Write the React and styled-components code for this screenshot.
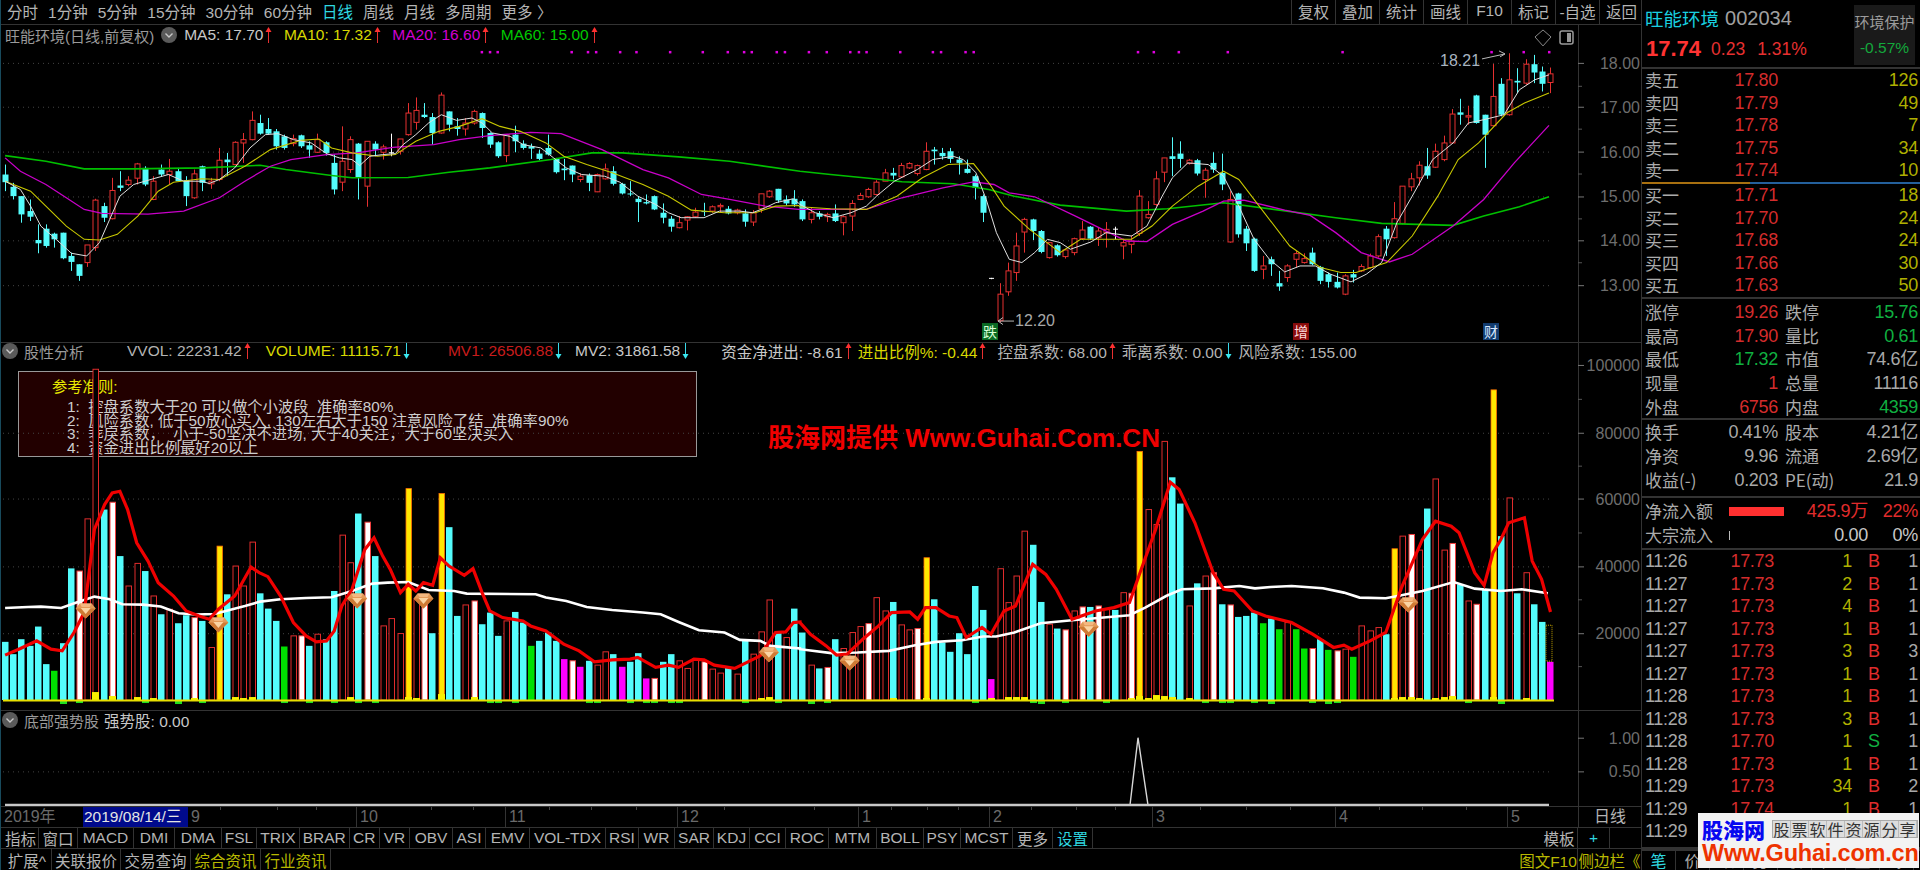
import React from 'react';
import styled, { createGlobalStyle } from 'styled-components';

const FONT = `"Liberation Sans","Noto Sans CJK SC",sans-serif`;
const CJK = `"Noto Sans CJK SC","Liberation Sans",sans-serif`;

const Global = createGlobalStyle`
  html, body { margin: 0; padding: 0; background: #000; overflow: hidden; }
  * { box-sizing: border-box; }
`;

/* ---------- data ---------- */
const X = (i) => 5 + 8.22 * i;
// bar kinds: c cyan, r hollow red
const C = [
['c',525,548,495,575],['c',562,590,550,600],['c',590,645,590,670],['c',635,652,600,665],['c',722,732,675,762],['c',688,740,675,745],['c',703,720,700,745],['c',700,777,700,780],['c',770,788,760,815],['c',795,830,795,845],
['r',737,790,737,803],['r',602,745,598,755],['c',620,655,610,668],['r',573,658,535,660],['c',558,565,515,575],['r',542,555,530,560],['r',493,536,490,555],['c',505,555,500,560],['r',545,600,530,602],['c',510,525,495,530],
['r',515,525,478,555],['c',515,545,505,545],['c',542,590,530,620],['r',523,595,510,598],['c',500,550,498,575],['r',545,553,535,568],['r',482,540,445,545],['c',480,488,460,530],['r',428,495,425,497],['r',420,430,400,490],
['r',362,420,335,422],['c',370,402,345,405],['c',388,402,355,405],['c',395,440,388,450],['c',410,445,405,450],['r',417,432,405,440],['c',407,440,405,445],['c',437,450,425,475],['r',420,458,402,460],['c',428,460,425,468],
['c',490,570,465,585],['r',485,548,380,575],['r',420,510,410,520],['c',432,535,430,600],['r',425,560,425,622],['c',432,450,425,470],['r',442,458,435,480],['w',458,462,402,470],['r',418,455,418,465],['r',340,405,310,408],
['r',332,368,293,390],['c',345,352,310,355],['c',352,400,340,435],['r',286,400,278,402],['c',335,375,335,395],['c',380,388,355,408],['r',370,388,355,408],['r',335,370,330,375],['c',340,385,338,415],['c',400,435,398,445],
['c',428,470,425,475],['r',405,468,405,488],['c',405,425,378,458],['c',432,445,422,450],['c',440,447,432,478],['c',462,478,450,482],['c',445,465,405,468],['c',478,518,475,522],['c',507,512,478,542],['c',498,525,498,548],
['r',530,540,522,548],['c',527,550,522,575],['r',525,577,522,578],['r',508,538,492,540],['c',515,553,500,558],['c',553,582,550,585],['c',582,585,545,590],['c',598,608,590,668],['c',608,612,585,615],['c',590,630,588,632],
['c',640,655,612,672],['c',658,682,650,697],['r',670,685,650,687],['r',652,662,650,693],['r',638,652,625,655],['c',635,638,610,650],['r',622,635,618,640],['r',618,622,612,640],['c',628,642,620,645],['r',632,640,628,645],
['c',642,667,630,682],['r',640,668,632,680],['r',583,628,583,640],['r',575,592,572,595],['c',568,603,568,610],['c',600,612,588,618],['c',598,615,572,622],
['c',605,660,600,665],['r',640,660,625,672],['c',642,652,635,660],['r',645,652,640,668],['c',642,665,615,668],['r',652,670,648,708],['r',612,650,602,695],['r',588,600,580,602],['r',570,592,565,595],['r',548,585,542,588],
['r',520,545,508,545],['c',520,528,505,540],['r',498,532,490,535],['r',492,505,488,508],['r',498,522,495,528],['r',455,510,428,512],['c',450,455,442,495],['c',460,470,445,480],['c',455,478,445,490],['c',480,490,470,525],
['c',508,520,480,522],['c',530,565,525,600],['c',590,640,585,668],['w',836,840,836,840],['r',885,965,852,970],['r',815,878,790,890],['r',740,820,700,845],['r',660,698,655,760],['c',660,695,658,722],['c',695,758,692,762],
['r',730,775,728,778],['c',738,768,735,772],['r',752,772,750,778],['r',718,760,715,768],['r',692,718,665,722],['c',682,718,680,722],['r',695,715,685,740],['r',690,700,668,745],['w',688,690,682,720],['r',730,740,718,780],
['r',725,735,708,762],['r',590,702,572,710],['r',645,655,605,658],['r',538,615,515,620],['r',475,518,475,548],['c',470,478,413,530],['c',462,478,425,505],['r',482,492,478,495],['c',482,522,478,528],['r',512,540,505,595],
['c',490,510,458,520],['c',520,555,462,572],['r',600,728,575,730],['c',582,705,580,715],['c',688,732,680,755],['c',718,815,715,818],['r',800,810,770,840],['c',780,795,772,830],['c',852,862,815,875],['r',800,835,795,848],
['r',763,780,755,805],['r',778,790,762,793],['c',760,795,745,798],['c',803,845,800,855],['c',825,848,820,865],['c',848,865,820,868],['r',830,885,825,888],['c',825,835,812,850],['r',802,815,795,818],['r',770,805,763,808],
['r',712,770,705,775],['c',688,720,680,770],['r',658,715,608,718],['r',560,672,560,675],['r',538,562,520,575],['r',497,535,485,558],['c',500,528,445,538],['r',455,503,432,505],['r',430,480,408,485],['r',343,430,328,432],
['c',338,345,297,375],['r',348,352,318,375],['c',287,370,285,372],['c',345,405,345,505],['r',290,378,192,380],['c',252,345,235,350],['r',240,345,160,348],['c',243,248,205,280],['r',193,250,178,255],['c',193,218,165,250],
['c',215,252,200,275],['r',222,248,203,280],
];

const V = 'c908 c945 c900 c920 c862 c975 g995 c912 c687 w695 r538 r88 c510 w488 c650 r740 r672 c695 r770 c825 r810 c852 c828 w835 c845 r925 y620 c765 r680 r740 r608 c762 c808 c845 g922 r890 w890 c920 r885 c900 c755 r587 r670 c522 w548 c650 r860 r838 r883 y447 r780 w770 c882 y462 c563 c830 r797 w785 c855 c820 c890 r845 c818 c850 g920 c905 c880 c905 m960 w965 m983 c965 r978 r938 c945 m983 c968 c942 m1018 w1018 c968 c945 r965 r988 r958 w968 r990 r1002 c985 r1005 c900 r945 r878 r782 c880 r895 c808 c880 r978 c988 w985 c900 r928 r880 r862 w853 r775 r815 c788 r857 r872 w868 y655 c780 c910 c938 c882 c945 c740 c812 m1020 r688 r790 r710 r575 c616 c788 r855 c868 w872 r815 w803 c803 w800 r810 c812 r760 w762 y335 r510 r555 r305 c413 c492 r800 c732 r710 w700 c795 w797 c833 c830 c820 g852 c838 g870 r850 g870 g928 w928 c900 g932 w935 r930 g953 r860 r875 r865 c885 y628 r590 w585 r632 c507 r418 r632 w612 c735 r785 w795 c750 y150 c590 r475 c762 r700 c795 c848 m968'.split(' ').map((s) => [s[0], +s.slice(1)]);

const z1 = (a) => a.map(([x, y]) => [x / 1.96, y / 3]);
const z2 = (a) => a.map(([x, y]) => [800 + x / 1.96, y / 3]);
const z5 = (a) => a.map(([x, y]) => [x / 1.96, 340 + y / 3]);
const z6 = (a) => a.map(([x, y]) => [800 + x / 1.912, 340 + y / 3]);
const P = (a) => a.map(([x, y]) => `${x.toFixed(1)},${y.toFixed(1)}`).join(' ');

const MA5 = P([...z1([[10,545],[40,570],[60,620],[80,680],[110,720],[140,762],[170,770],[195,730],[215,660],[235,590],[262,555],[300,538],[330,525],[360,545],[395,545],[410,552],[430,540],[460,505],[490,445],[520,405],[545,402],[575,420],[610,430],[640,462],[665,475],[690,480],[705,498],[725,470],[750,465],[775,462],[790,435],[815,405],[840,370],[865,345],[895,362],[925,355],[945,370],[965,400],[1000,410],[1025,435],[1060,445],[1085,475],[1110,505],[1140,525],[1185,530],[1215,548],[1250,590],[1285,615],[1310,640],[1335,655],[1380,655],[1410,635],[1450,635],[1475,640],[1500,625],[1520,610],[1555,598]]),
 ...z2([[0,615],[30,640],[65,655],[100,640],[130,620],[150,590],[185,545],[230,510],[260,480],[300,470],[320,480],[345,520],[365,600],[385,700],[410,780],[435,790],[460,760],[485,720],[510,730],[530,750],[570,728],[600,700],[650,710],[680,680],[710,590],[730,535],[760,490],[800,495],[830,530],[860,620],[890,720],[920,780],[950,818],[980,800],[1010,800],[1040,825],[1080,848],[1110,825],[1140,790],[1170,670],[1200,590],[1240,480],[1280,430],[1310,370],[1340,360],[1380,345],[1410,270],[1440,240],[1468,225]])]);
const MA10 = P([...z1([[10,545],[60,575],[100,635],[130,680],[165,720],[195,722],[230,705],[270,650],[310,575],[340,548],[395,538],[430,540],[480,500],[530,450],[590,422],[625,418],[650,445],[690,460],[740,470],[775,465],[815,425],[860,395],[900,380],[945,357],[980,380],[1020,395],[1070,430],[1105,470],[1150,495],[1200,520],[1260,555],[1310,590],[1355,632],[1420,640],[1480,640],[1520,620],[1565,618]]),
 ...z2([[0,622],[60,628],[130,630],[190,590],[240,535],[290,495],[340,492],[370,550],[400,620],[450,690],[510,760],[550,720],[650,720],[690,680],[730,620],[780,560],[830,515],[860,540],[900,620],[960,740],[1020,805],[1060,820],[1090,820],[1150,790],[1200,710],[1250,590],[1290,480],[1330,430],[1385,340],[1420,310],[1468,280]])]);
const MA20 = P([...z1([[10,475],[40,515],[90,555],[130,595],[165,630],[200,642],[290,644],[360,635],[430,595],[480,545],[530,500],[570,480],[640,465],[700,460],[770,443],[850,435],[900,420],[960,408],[1040,398],[1100,402],[1180,450],[1260,510],[1310,535],[1375,585],[1430,600],[1500,620],[1565,630]]),
 ...z2([[0,630],[130,630],[200,595],[280,565],[340,547],[380,555],[410,580],[460,592],[540,650],[600,695],[640,725],[680,727],[730,675],[790,635],[830,605],[870,602],[950,632],[1000,648],[1050,700],[1100,760],[1155,788],[1200,765],[1280,680],[1340,600],[1400,490],[1468,377]])]);
const MA60 = P([...z1([[10,468],[90,485],[165,508],[260,508],[400,505],[510,497],[560,510],[650,528],[690,535],[800,534],[880,518],[960,505],[1080,480],[1160,460],[1220,460],[1330,472],[1430,485],[1568,515]]),
 ...z2([[0,515],[60,525],[140,537],[200,547],[300,553],[370,570],[420,590],[510,617],[640,635],[720,628],[830,610],[940,632],[1050,655],[1140,672],[1280,678],[1340,650],[1410,622],[1468,592]])]);
const RED = P([...z5([[10,948],[40,928],[72,905],[100,930],[122,935],[145,880],[165,820],[185,570],[205,495],[220,460],[235,455],[250,510],[268,610],[290,665],[310,730],[340,770],[365,815],[390,830],[410,840],[428,810],[460,770],[492,683],[508,700],[525,712],[550,770],[575,850],[600,890],[620,908],[640,905],[655,875],[670,800],[690,750],[715,630],[733,595],[750,650],[765,690],[785,760],[800,735],[815,755],[830,730],[848,738],[863,655],[880,680],[910,708],[927,688],[945,760],[960,815],[985,835],[1025,845],[1040,860],[1070,875],[1105,915],[1135,935],[1165,968],[1200,962],[1235,960],[1250,955],[1285,985],[1310,978],[1330,985],[1360,960],[1380,962],[1400,978],[1440,988],[1490,950],[1520,880],[1540,878],[1555,850],[1568,848]]),
 ...z6([[0,850],[20,885],[50,920],[70,948],[90,945],[120,900],[150,860],[175,820],[210,818],[225,840],[240,805],[260,805],[285,830],[300,835],[318,895],[348,865],[365,885],[390,815],[412,800],[445,675],[470,705],[490,750],[520,840],[565,815],[600,805],[630,790],[650,700],[680,570],[708,428],[725,450],[755,550],[790,700],[810,750],[830,755],[865,815],[890,830],[940,850],[980,885],[1020,925],[1040,918],[1055,930],[1090,905],[1120,880],[1150,745],[1190,600],[1215,545],[1245,560],[1260,580],[1290,700],[1308,738],[1325,640],[1340,600],[1355,550],[1385,535],[1400,665],[1418,720],[1435,818]])]);
const WHITE = P([...z5([[10,806],[55,803],[80,802],[120,806],[150,790],[185,772],[215,780],[240,795],[280,796],[315,802],[350,822],[385,826],[420,824],[480,800],[510,787],[550,780],[600,776],[650,774],[690,755],[730,733],[760,730],[800,728],[840,752],[890,755],[915,763],[1050,765],[1070,775],[1110,785],[1150,803],[1200,812],[1260,820],[1295,825],[1330,848],[1370,873],[1420,880],[1450,902],[1490,905],[1510,920],[1568,928]]),
 ...z6([[0,930],[60,942],[110,940],[170,935],[220,918],[260,908],[310,903],[350,892],[375,892],[410,880],[460,852],[520,843],[630,828],[660,805],[700,770],[730,750],[790,747],[840,740],[870,747],[900,743],[940,740],[1000,747],[1040,760],[1070,775],[1120,777],[1150,768],[1190,755],[1250,728],[1290,748],[1340,755],[1380,750],[1430,762]])]);

const DOTS = [...[944,960,975,1120,1152,1168,1215,1247,1313,1377,1426,1458,1473,1522,1538].map((x) => x / 1.96),
  ...[17,52,98,115,130,196,260,276,324,340,662,693,742,838,1063,1355,1418,1468].map((x) => 800 + x / 1.96)];
const DIAMONDS = [...z5([[168,815],[428,857],[700,785],[830,785],[1507,947]]), ...z6([[95,972],[552,870],[1163,797]])];
const SMALL_Y = [[11,8],[13,4],[16,3],[18,2],[23,2],[28,3],[29,2],[30,3],[42,3],[49,3],[50,2],[53,6],[57,3],[92,2],[93,3],[108,2],[112,2],[120,2],[122,3],[123,3],[124,3],[137,2],[138,4],[139,2],[140,5],[141,4],[142,3],[144,2],[169,2],[170,3],[171,3],[172,2],[174,2],[175,3],[176,4],[181,3],[185,2]];
const SMALL_G = [7,9,17,21,24,34,37,40,43,45,59,60,62,71,72,76,78,79,81,82,90,94,98,100,118,125,126,129,134,146,148,149,152,154,159,161,162,178,182];

const AXIS_MAIN = [['18.00',63],['17.00',107],['16.00',152],['15.00',197],['14.00',241],['13.00',286]];
const AXIS_VOL = [['100000',365],['80000',433],['60000',499],['40000',567],['20000',634]];
const AXIS_STR = [['1.00',738],['0.50',772]];

const colorOf = { c:'#54fcfc', r:'#000', w:'#fff', y:'#ffe600', g:'#00e000', m:'#ff00ff' };
const strokeOf = { c:'none', r:'#e02c2c', w:'#f04040', y:'#ff7000', g:'none', m:'none' };

const Grid = ({ ys, x2 = 1549 }) => ys.map((y) => <line key={y} x1="3" y1={y + 0.5} x2={x2} y2={y + 0.5} stroke="#444" strokeDasharray="1 4" />);
const Axis = ({ items, minor = [] }) => (
  <>
    <line x1="1578.5" y1="0" x2="1578.5" y2="900" stroke="#333" />
    {minor.map((y) => <line key={y} x1="1578" x2="1582" y1={y + 0.5} y2={y + 0.5} stroke="#555" />)}
    {items.map(([t, y]) => (
      <g key={t}>
        <line x1="1578" y1={y + 0.5} x2="1584" y2={y + 0.5} stroke="#777" />
        <text x="1640" y={y + 6} textAnchor="end" fill="#6e6e6e" fontSize="16" fontFamily={FONT}>{t}</text>
      </g>
    ))}
  </>
);

/* ---------- styled parts ---------- */
const Page = styled.div`
  position: relative; display: flex; width: 1920px; height: 870px; background: #000;
  color: #b4b4b4; font-family: ${FONT}; font-size: 16px; overflow: hidden;
`;
const Left = styled.div`
  display: flex; flex-direction: column; width: 1642px; border-left: 1px solid #184a5c; flex: none;
`;
const TopBar = styled.div`
  display: flex; justify-content: space-between; height: 25px; border-bottom: 1px solid #333; flex: none;
`;
const Tabs = styled.div`display: flex; align-items: center; padding: 0 0 2px 6px; gap: 10px; font-size: 15.5px;`;
const Tab = styled.span`color: ${(p) => (p.$on ? '#2fd8e0' : '#b4b4b4')};`;
const Tools = styled.div`display: flex; margin-right: -1px;`;
const Tool = styled.div`
  width: 44px; display: flex; align-items: center; justify-content: center; border-left: 1px solid #333; font-size: 15.5px; padding-bottom: 2px;
`;
const Pane = styled.div`
  position: relative; flex: none; height: ${(p) => p.$h}px; border-bottom: 1px solid #333;
`;
const PaneSvg = styled.svg`
  position: relative; z-index: 1; display: block; width: 1641px; height: 100%;
`;
const Legend = styled.div`
  position: absolute; z-index: 2; left: ${(p) => p.$x || 0}px; top: ${(p) => p.$y || 0}px;
  display: flex; align-items: center; height: 22px; white-space: nowrap; font-size: 15.5px;
`;
const Item = styled.span`
  display: inline-flex; align-items: center; color: ${(p) => p.$c || '#b4b4b4'}; margin-left: ${(p) => p.$ml || 0}px;
`;
const Title = styled.span`color: #9a9a9a; font-size: 15px; margin: 0 ${(p) => p.$mr || 0}px 0 ${(p) => p.$ml || 0}px;`;
const InfoBox = styled.div`
  position: absolute; z-index: 0; left: 17px; top: 28px; width: 679px; height: 86px;
  background: #220000; border: 1px solid #999; padding: 5px 0 0 33px; font-size: 15.3px; line-height: 13.6px; color: #cecece;
`;
const InfoTitle = styled.div`color: #e8e800; margin-bottom: 3px; line-height: 20px;`;
const InfoLine = styled.div`padding-left: 15px; white-space: pre;`;
const Stamp = styled.div`
  position: absolute; z-index: 2; left: 767px; top: 80px; color: #f00000; font-weight: 700; font-size: 26px; white-space: nowrap; line-height: 30px;
`;
const DateBar = styled.div`display: flex; height: 21px; border-bottom: 1px solid #333; flex: none; position: relative; color: #6a6a6a;`;
const DateCell = styled.div`
  width: ${(p) => p.$w}px; padding-left: ${(p) => p.$pl ?? 3}px; border-left: ${(p) => (p.$line ? '1px solid #333' : 'none')}; line-height: 20px; flex: none; font-size: 16px;
  color: ${(p) => p.$c || 'inherit'};
`;
const DateNow = styled.div`
  width: 105px; flex: none; background: #000a8c; color: #e4e4e4; line-height: 20px; padding-left: 1px; white-space: nowrap; font-size: 15.5px; overflow: hidden;
`;
const DateTick = styled.i`position: absolute; top: 0; width: 1px; height: 3px; background: #444;`;
const IndexRow = styled.div`display: flex; height: 21px; border-bottom: 1px solid #333; flex: none; padding-left: 2px;`;
const Cell = styled.div`
  display: flex; align-items: center; justify-content: center; width: ${(p) => p.$w}px; border-right: 1px solid #333; white-space: nowrap;
  color: ${(p) => p.$c || '#b4b4b4'}; font-size: 15.5px; flex: none;
`;
const Spacer = styled.div`flex: 1;`;
const BottomRow = styled.div`display: flex; flex: 1; padding-left: 2px;`;

const Panel = styled.div`display: flex; flex-direction: column; flex: 1; border-left: 1px solid #333; margin-left: -1px; min-width: 0; font-size: 18px; color: #b0b0b0;`;
const Head = styled.div`display: flex; height: 69px; flex: none; border-bottom: 2px solid #333; padding-left: 3px;`;
const HeadMain = styled.div`flex: 1; display: flex; flex-direction: column; padding-top: 6px; min-width: 0;`;
const NameRow = styled.div`display: flex; align-items: center; gap: 6px; height: 24px;`;
const Name = styled.span`color: #19d0e0; font-size: 18.5px;`;
const Code = styled.span`color: #a0a0a0; font-size: 20px;`;
const PriceRow = styled.div`display: flex; align-items: center; height: 30px; margin-top: 4px; color: #e63030;`;
const Big = styled.span`font-size: 22px; font-weight: 700; color: #ff3333; margin: 0 10px 0 1px;`;
const Chg = styled.span`font-size: 17.5px; margin-right: ${(p) => p.$mr || 0}px;`;
const Sector = styled.div`
  width: 61px; height: 60px; margin: 5px 5px 0 0; background: #1a1a1a; display: flex; flex-direction: column; align-items: center; justify-content: center; gap: 9px; flex: none;
`;
const SectorName = styled.span`font-size: 15px; color: #9c9c9c; line-height: 16px; white-space: nowrap;`;
const SectorVal = styled.span`font-size: 15.5px; color: #14a83c; line-height: 16px;`;
const Block = styled.div`
  display: flex; flex-direction: column; flex: none; padding-top: ${(p) => p.$pt || 0}px; height: ${(p) => p.$h}px;
  border-bottom: ${(p) => (p.$line ? `2px solid ${p.$line}` : 'none')}; position: relative;
`;
const SplitLine = styled.div`display: flex; height: 2px; flex: none; background: linear-gradient(90deg, #a87010 0 108px, #24609c 108px);`;
const BookRow = styled.div`
  display: grid; grid-template-columns: 40px 93px 1fr; align-items: center; height: 22.5px; padding: 0 2px 0 3px; flex: none;
`;
const InfoRow = styled.div`
  display: grid; grid-template-columns: 40px 93px auto 1fr; align-items: center; height: ${(p) => p.$h}px; padding: 0 2px 0 3px; flex: none;
`;
const Lab = styled.span`font-family: ${CJK}; font-size: 17px; color: #ababab; white-space: nowrap; line-height: 20px; padding-left: ${(p) => p.$pl || 0}px;`;
const Num = styled.span`text-align: ${(p) => (p.$left ? 'left' : 'right')}; color: ${(p) => p.$c || '#a8a8a8'}; white-space: nowrap; line-height: 20px; font-size: 18px; letter-spacing: -0.3px;`;
const FlowRow = styled.div`
  display: grid; grid-template-columns: 84px 55px 1fr 50px; align-items: center; height: 24px; padding: 0 2px 0 3px; flex: none;
`;
const FlowBar = styled.div`height: ${(p) => p.$h}px; width: ${(p) => p.$w}px; background: ${(p) => p.$c};`;
const TickRow = styled.div`
  display: grid; grid-template-columns: 60px 69px 78px 40px 1fr; align-items: center; height: 22.5px; padding: 0 2px 0 3px; flex: none;
`;
const Side = styled.span`color: ${(p) => (p.$s === 'S' ? '#10b040' : '#e02c2c')}; padding-left: 16px; font-size: 18px; line-height: 20px;`;
const PanelTabs = styled.div`display: flex; flex: 1; min-height: 0; border-top: 2px solid #333;`;
const PTab = styled.div`
  width: 34px; border-right: 1px solid #333; text-align: center; line-height: 18px; font-family: ${CJK}; font-size: 16px; color: ${(p) => p.$c || '#a8a8a8'}; flex: none;
`;

const Mark = styled.div`
  position: absolute; z-index: 5; left: 1698px; top: 813px; width: 221px; height: 55px; background: #f3f3f3;
  display: flex; flex-direction: column; padding: 5px 0 0 4px;
`;
const MarkTop = styled.div`display: flex; align-items: center; height: 22px; gap: 7px;`;
const MarkBlue = styled.span`font-family: ${CJK}; font-weight: 900; font-size: 21px; color: #0808f0; line-height: 22px;`;
const MarkGrid = styled.span`
  display: flex; height: 18px; background: #ddd; border: 1px solid #aaa;
`;
const MarkChar = styled.span`
  width: 18px; text-align: center; font-family: "Noto Sans CJK SC", serif; font-size: 16px; line-height: 16px; color: #333; border-right: 1px solid #bbb;
`;
const MarkRed = styled.span`font-weight: 700; font-size: 23.5px; color: #ee3300; line-height: 24px; margin-top: 1px; white-space: nowrap; letter-spacing: -0.2px;`;
const ArrowSvg = styled.svg`margin-left: 2px; flex: none;`;

/* ---------- icons ---------- */
const Arrow = ({ up }) => (
  <ArrowSvg width="7" height="18" viewBox="0 0 7 18">
    {up ? <><line x1="3.5" y1="3" x2="3.5" y2="17" stroke="#e83030" /><path d="M0.5 6L3.5 1L6.5 6Z" fill="#ff3030" /></>
      : <><line x1="3.5" y1="1" x2="3.5" y2="15" stroke="#39d8e8" /><path d="M0.5 12L3.5 17L6.5 12Z" fill="#39e8f0" /></>}
  </ArrowSvg>
);
const Chevron = () => (
  <svg width="16" height="16" viewBox="0 0 16 16">
    <circle cx="8" cy="8" r="8" fill="#5a5a5a" />
    <path d="M4.5 6.5L8 10L11.5 6.5" stroke="#c8c8c8" strokeWidth="1.4" fill="none" />
  </svg>
);
const Gem = ({ x, y }) => (
  <g transform={`translate(${x} ${y})`}>
    <path d="M-6-7.5H6L10-2.5L0 7.5L-10-2.5Z" fill="#e49a58" />
    <path d="M-10-2.5H10L0 7.5Z" fill="#cf7a34" />
    <path d="M-5-3H5L0 3Z" fill="#fbd4a2" />
    <path d="M-6-7.5H6L4-4H-4Z" fill="#f4b880" />
  </g>
);

/* ---------- data for text ---------- */
const TOP = [['分时'],['1分钟'],['5分钟'],['15分钟'],['30分钟'],['60分钟'],['日线',1],['周线'],['月线'],['多周期'],['更多 〉']];
const TOOLS = ['复权','叠加','统计','画线','F10','标记','-自选','返回'];
const INDEX = [['指标',36],['窗口',39],['MACD',56],['DMI',41],['DMA',47],['FSL',35],['TRIX',43],['BRAR',49.5],['CR',30.5],['VR',30],['OBV',43],['ASI',33],['EMV',44],['VOL-TDX',76],['RSI',33],['WR',36],['SAR',39],['KDJ',36],['CCI',36],['ROC',43],['MTM',48],['BOLL',47],['PSY',37],['MCST',52],['更多',40]];
const SELL = [['卖五','17.80','126'],['卖四','17.79','49'],['卖三','17.78','7'],['卖二','17.75','34'],['卖一','17.74','10']];
const BUY = [['买一','17.71','18'],['买二','17.70','24'],['买三','17.68','24'],['买四','17.66','30'],['买五','17.63','50']];
const STATS = [
  ['涨停','19.26','#d42c2c','跌停','15.76','#10b040'],['最高','17.90','#d42c2c','量比','0.61','#10b040'],['最低','17.32','#10b040','市值','74.6亿'],
  ['现量','1','#d42c2c','总量','11116'],['外盘','6756','#d42c2c','内盘','4359','#10b040'],
];
const STATS2 = [['换手','0.41%',null,'股本','4.21亿'],['净资','9.96',null,'流通','2.69亿'],['收益(-)','0.203',null,'PE(动)','21.9']];
const TICKS = [['11:26','17.73','1','B','1'],['11:27','17.73','2','B','1'],['11:27','17.73','4','B','1'],['11:27','17.73','1','B','1'],['11:27','17.73','3','B','3'],['11:27','17.73','1','B','1'],['11:28','17.73','1','B','1'],['11:28','17.73','3','B','1'],['11:28','17.70','1','S','1'],['11:28','17.73','1','B','1'],['11:29','17.73','34','B','2'],['11:29','17.74','1','B','1'],['11:29','17.74','1','B','1']];
const DATES = [['9',168,0],['10',149,1],['11',172,1],['12',181,1],['1',131,1],['2',163,1],['3',183,1],['4',172,1],['5',71,1]];
const DTICKS = [...[430,540,618,843,925,1075,1157,1245,1418].map((x) => x / 1.96), ...[25,173,240,300,440,525,600,763,850,935,1105,1187,1272].map((x) => 800 + x / 1.912)];

export default function App() {
  return (
    <Page>
      <Global />
      <Left>
        <TopBar>
          <Tabs>{TOP.map(([t, on]) => <Tab key={t} $on={on}>{t}</Tab>)}</Tabs>
          <Tools>{TOOLS.map((t) => <Tool key={t}>{t}</Tool>)}</Tools>
        </TopBar>

        <Pane $h={318}>
          <PaneSvg viewBox="1 25 1641 318" preserveAspectRatio="none">
            <Grid ys={[63, 107, 152, 197, 241, 286]} />
            <Axis items={AXIS_MAIN} minor={[86, 129, 174, 219, 263]} />
            {DOTS.map((x, i) => <rect key={i} x={x - 1} y="51" width="2.5" height="2.5" fill="#e000e0" />)}
            {C.map(([k, t, b, h, l], i) => {
              const x = Math.round(X(i));
              const col = k === 'c' ? '#54fcfc' : k === 'r' ? '#e63030' : '#fff';
              return (
                <g key={i}>
                  <line x1={x + 0.5} x2={x + 0.5} y1={h / 3} y2={l / 3} stroke={col} />
                  {k === 'w' ? <rect x={x - 2} y={t / 3} width="5" height="1" fill="#fff" />
                    : k === 'c' ? <rect x={x - 2.5} y={t / 3} width="6" height={Math.max((b - t) / 3, 1)} fill="#54fcfc" />
                      : <rect x={x - 2} y={t / 3} width="5" height={Math.max((b - t) / 3, 1)} fill="#000" stroke="#e63030" />}
                </g>
              );
            })}
            <polyline points={MA60} fill="none" stroke="#00c000" strokeWidth="1.6" />
            <polyline points={MA20} fill="none" stroke="#c800c8" strokeWidth="1.3" />
            <polyline points={MA10} fill="none" stroke="#c8c800" strokeWidth="1.1" />
            <polyline points={MA5} fill="none" stroke="#e0e0e0" strokeWidth="1" />
            <g fill="none" stroke="#b8b8b8">
              <path d="M1482 59L1505 54" /><path d="M1499 51L1505 54L1500 57" />
              <path d="M1014 322H998" /><path d="M1003 318.5L998 322L1003 325.5" />
              <path d="M1535 37L1543 30L1551 37L1543 46Z" stroke="#888" />
              <rect x="1560" y="31" width="13" height="13" rx="2" stroke="#999" strokeWidth="1.5" />
              <rect x="1567" y="33" width="4" height="9" fill="#999" stroke="none" />
            </g>
            <text x="1440" y="66" fill="#a8b4c0" fontSize="16" fontFamily={FONT}>18.21</text>
            <text x="1015" y="327" fill="#a8a8a8" fontSize="16" fontFamily={FONT}>12.20</text>
            <rect x="982" y="324" width="16" height="17" fill="#0a6a24" />
            <text x="990" y="338" fill="#d8ffd8" fontSize="14" textAnchor="middle" fontFamily={CJK}>跌</text>
            <rect x="1293" y="324" width="16" height="17" fill="#8a0c0c" />
            <text x="1301" y="338" fill="#ffdcdc" fontSize="14" textAnchor="middle" fontFamily={CJK}>增</text>
            <rect x="1483" y="324" width="16" height="17" fill="#123c70" />
            <text x="1491" y="338" fill="#d8e8ff" fontSize="14" textAnchor="middle" fontFamily={CJK}>财</text>
          </PaneSvg>
          <Legend $x={4} $y={-1}>
            <Title $mr={7}>旺能环境(日线,前复权)</Title>
            <Chevron />
            <Item $ml={7} $c="#c8c8c8">MA5: 17.70<Arrow up /></Item>
            <Item $ml={11.5} $c="#d8d800">MA10: 17.32<Arrow up /></Item>
            <Item $ml={11.5} $c="#d000d0">MA20: 16.60<Arrow up /></Item>
            <Item $ml={11.5} $c="#00c800">MA60: 15.00<Arrow up /></Item>
          </Legend>
        </Pane>

        <Pane $h={368}>
          <InfoBox>
            <InfoTitle>参考准则:</InfoTitle>
            <InfoLine>1:  控盘系数大于20 可以做个小波段  准确率80%</InfoLine>
            <InfoLine>2:  风险系数, 低于50放心买入, 130左右大于150 注意风险了结  准确率90%</InfoLine>
            <InfoLine>3:  乖戾系数，  小于-50坚决不进场, 大于40关注，大于60坚决买入</InfoLine>
            <InfoLine>4:  资金进出比例最好20以上</InfoLine>
          </InfoBox>
          <PaneSvg viewBox="1 343 1641 368" preserveAspectRatio="none">
            <Grid ys={[433, 499, 567, 634]} />
            <Axis items={AXIS_VOL} minor={[399, 466, 533, 600, 667]} />
            {V.map(([k, t], i) => {
              const x = Math.round(X(i));
              const y = 340 + t / 3;
              const hollow = k === 'r' || k === 'w' || k === 'y';
              return (
                <rect key={i} x={x - (hollow ? 2 : 3)} y={y} width={hollow ? 5.5 : 6.5} height={701 - y}
                  fill={colorOf[k]} stroke={strokeOf[k]} strokeWidth={k === 'y' ? 0.8 : 1} />
              );
            })}
            <rect x="1546" y="626" width="6" height="36" fill="none" stroke="#c0a000" strokeDasharray="1 1" />
            {SMALL_G.map((i) => <rect key={i} x={Math.round(X(i)) - 3} y="701" width="7" height={i % 7 === 0 ? 4 : 3} fill="#20e020" />)}
            {SMALL_Y.map(([i, h]) => <rect key={i} x={Math.round(X(i)) - 3} y={701 - h} width="7" height={h} fill="#f8f000" />)}
            <line x1="3" x2="1554" y1="701.5" y2="701.5" stroke="#e8e000" strokeWidth="2" />
            <polyline points={WHITE} fill="none" stroke="#fff" strokeWidth="2.6" />
            <polyline points={RED} fill="none" stroke="#f00000" strokeWidth="3.2" />
            {DIAMONDS.map(([x, y]) => <Gem key={x} x={x} y={y} />)}
          </PaneSvg>
          <Legend $x={1} $y={-3}>
            <Chevron />
            <Title $ml={6}>股性分析</Title>
            <Item $ml={43}>VVOL: 22231.42<Arrow up /></Item>
            <Item $ml={15} $c="#d8d800">VOLUME: 11115.71<Arrow /></Item>
            <Item $ml={38} $c="#c81c1c">MV1: 26506.88<Arrow /></Item>
            <Item $ml={13} $c="#c8c8c8">MV2: 31861.58<Arrow /></Item>
            <Item $ml={32} $c="#c8c8c8">资金净进出: -8.61<Arrow up /></Item>
            <Item $ml={6} $c="#d8d800">进出比例%: -0.44<Arrow up /></Item>
            <Item $ml={11}>控盘系数: 68.00<Arrow up /></Item>
            <Item $ml={6}>乖离系数: 0.00<Arrow /></Item>
            <Item $ml={7}>风险系数: 155.00</Item>
          </Legend>
          <Stamp>股海网提供 Www.Guhai.Com.CN</Stamp>
        </Pane>

        <Pane $h={96}>
          <PaneSvg viewBox="1 711 1641 96" preserveAspectRatio="none">
            <Grid ys={[772]} />
            <Axis items={AXIS_STR} />
            <polyline points="5,806 1130,806 1138,738 1148,806 1549,806" fill="none" stroke="#d8d8d8" strokeWidth="1.4" />
            <line x1="5" x2="1549" y1="806" y2="806" stroke="#c8c8c8" strokeWidth="2.4" />
          </PaneSvg>
          <Legend $x={1} $y={-2}>
            <Chevron />
            <Title $ml={6} $mr={5}>底部强势股</Title>
            <Item $c="#c8c8c8">强势股: 0.00</Item>
          </Legend>
        </Pane>

        <DateBar>
          {DTICKS.map((x) => <DateTick key={x} style={{ left: x }} />)}
          <DateCell $w={82}>2019年</DateCell>
          <DateNow>2019/08/14/三</DateNow>
          {DATES.map(([t, w, line]) => <DateCell key={t} $w={w} $line={line}>{t}</DateCell>)}
          <DateCell $w={63} $line={1} $pl={15} $c="#b4b4b4">日线</DateCell>
        </DateBar>

        <IndexRow>
          {INDEX.map(([t, w]) => <Cell key={t} $w={w}>{t}</Cell>)}
          <Cell $w={40} $c="#2fd8e0">设置</Cell>
          <Spacer />
          <Cell $w={37}>模板</Cell>
          <Cell $w={32} $c="#2fd8e0">+</Cell>
          <Cell $w={32} />
        </IndexRow>

        <BottomRow>
          <Cell $w={49}>扩展^</Cell>
          <Cell $w={69}>关联报价</Cell>
          <Cell $w={70}>交易查询</Cell>
          <Cell $w={70} $c="#b8b800">综合资讯</Cell>
          <Cell $w={70} $c="#b8b800">行业资讯</Cell>
          <Spacer />
          <Cell $w={59} $c="#b8b800">图文F10</Cell>
          <Cell $w={64} $c="#b8b800">侧边栏《</Cell>
        </BottomRow>
      </Left>

      <Panel>
        <Head>
          <HeadMain>
            <NameRow><Name>旺能环境</Name><Code>002034</Code></NameRow>
            <PriceRow><Big>17.74</Big><Chg $mr={12}>0.23</Chg><Chg>1.31%</Chg></PriceRow>
          </HeadMain>
          <Sector><SectorName>环境保护</SectorName><SectorVal>-0.57%</SectorVal></Sector>
        </Head>
        <Block $h={113}>
          {SELL.map(([a, b, c]) => <BookRow key={a}><Lab>{a}</Lab><Num $c="#d42c2c">{b}</Num><Num $c="#b0b000">{c}</Num></BookRow>)}
        </Block>
        <SplitLine />
        <Block $h={115} $line="#333">
          {BUY.map(([a, b, c]) => <BookRow key={a}><Lab>{a}</Lab><Num $c="#d42c2c">{b}</Num><Num $c="#b0b000">{c}</Num></BookRow>)}
        </Block>
        <Block $h={121} $line="#333" $pt={1}>
          {STATS.map(([a, b, bc, c, d, dc]) => <InfoRow key={a} $h={23.7}><Lab>{a}</Lab><Num $c={bc}>{b}</Num><Lab $pl={7}>{c}</Lab><Num $c={dc}>{d}</Num></InfoRow>)}
        </Block>
        <Block $h={78} $line="#333">
          {STATS2.map(([a, b, bc, c, d]) => <InfoRow key={a} $h={24.2}><Lab>{a}</Lab><Num $c={bc}>{b}</Num><Lab $pl={7}>{c}</Lab><Num>{d}</Num></InfoRow>)}
        </Block>
        <Block $h={52} $line="#333" $pt={1}>
          <FlowRow><Lab>净流入额</Lab><FlowBar $w={55} $h={9} $c="#ff3030" /><Num $c="#e02c2c">425.9万</Num><Num $c="#e02c2c">22%</Num></FlowRow>
          <FlowRow><Lab>大宗流入</Lab><FlowBar $w={1} $h={9} $c="#bbb" /><Num $c="#c8c8c8">0.00</Num><Num $c="#c8c8c8">0%</Num></FlowRow>
        </Block>
        <Block $h={299} $line="#333">
          {TICKS.map(([a, b, c, d, e], i) => (
            <TickRow key={i}>
              <Num $left>{a}</Num>
              <Num $c="#d42c2c">{b}</Num>
              <Num $c="#b0b000">{c}</Num>
              <Side $s={d}>{d}</Side>
              <Num>{e}</Num>
            </TickRow>
          ))}
        </Block>
        <PanelTabs>
          <PTab $c="#2fd8e0">笔</PTab><PTab>价</PTab><PTab>细</PTab><PTab>势</PTab><PTab>联</PTab><PTab>值</PTab><PTab>主</PTab><PTab>筹</PTab>
        </PanelTabs>
      </Panel>

      <Mark>
        <MarkTop>
          <MarkBlue>股海网</MarkBlue>
          <MarkGrid>{'股票软件资源分享'.split('').map((c) => <MarkChar key={c}>{c}</MarkChar>)}</MarkGrid>
        </MarkTop>
        <MarkRed>Www.Guhai.com.cn</MarkRed>
      </Mark>
    </Page>
  );
}
